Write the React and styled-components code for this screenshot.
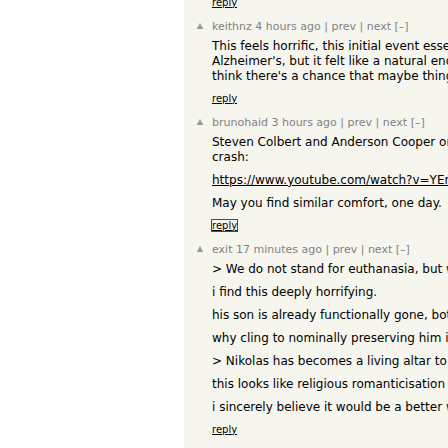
import React from 'react';
import styled, { createGlobalStyle } from 'styled-components';

const GlobalStyle = createGlobalStyle`
  html, body {
    margin: 0;
    padding: 0;
    background: #fff;
    overflow: hidden;
  }
  body {
    font-family: "DejaVu Sans", Verdana, Geneva, sans-serif;
  }
`;

const comments = [
  {
    id: 'c1',
    user: 'keithnz',
    age: '4 hours ago',
    paragraphs: [
      [
        'This feels horrific, this initial event essentially gave him',
        "Alzheimer's, but it felt like a natural end to the story. I",
        "think there's a chance that maybe things could improve here.",
      ],
    ],
  },
  {
    id: 'c2',
    user: 'brunohaid',
    age: '3 hours ago',
    focused: true,
    paragraphs: [
      ['Steven Colbert and Anderson Cooper on grief, loss and his family plane', 'crash:'],
      [{ link: 'https://www.youtube.com/watch?v=YEnOUwvRH6o' }],
      ['May you find similar comfort, one day.'],
    ],
  },
  {
    id: 'c3',
    user: 'exit',
    age: '17 minutes ago',
    paragraphs: [
      ['> We do not stand for euthanasia, but we believe life is sacred.'],
      ['i find this deeply horrifying.'],
      ['his son is already functionally gone, both in mind and in spirit.'],
      ['why cling to nominally preserving him in this state for years?'],
      ['> Nikolas has becomes a living altar to our faith.'],
      ['this looks like religious romanticisation of suffering.'],
      ['i sincerely believe it would be a better way to let him go.'],
    ],
  },
];

const Page = styled.div`
  display: grid;
  grid-template-columns: 184px 1fr;
  height: 448px;
`;

const Gutter = styled.div`
  background: #fff;
`;

const Thread = styled.div`
  background: #f6f6ef;
  overflow: hidden;
  min-width: 0;
`;

const Tail = styled.div`
  margin-top: -3.5px;
  margin-bottom: 11px;
  padding-left: 28px;
`;

const Comment = styled.div`
  display: grid;
  grid-template-columns: 28px 1fr;
  margin-bottom: 11px;
`;

const Vote = styled.div`
  padding-left: 11px;
  padding-top: 1px;

  svg {
    display: block;
  }
`;

const Body = styled.div`
  min-width: 0;
  white-space: nowrap;
`;

const Head = styled.div`
  font-size: 11px;
  line-height: 13px;
  color: #828282;
  margin-bottom: 6px;

  a {
    color: #828282;
    text-decoration: none;
  }
`;

const Para = styled.p`
  margin: 0;
  font-size: 12px;
  line-height: 15px;
  color: #000;

  & + & {
    margin-top: 8px;
  }

  a {
    color: #000;
    text-decoration: underline;
  }
`;

const Reply = styled.div`
  margin-top: ${(p) => (p.$tail ? '0' : '9px')};
  font-size: 10px;
  line-height: 12px;

  a {
    color: #000;
    text-decoration: underline;
    outline: ${(p) => (p.$focused ? '1px solid #f00' : 'none')};
    outline-offset: 0;
  }
`;

const UpArrow = () => (
  <svg width="10" height="10" viewBox="0 0 10 10">
    <polygon points="1.7,8 5,2 8.3,8" fill="#9a9a9a" />
  </svg>
);

const CommentItem = ({ c }) => (
  <Comment>
    <Vote>
      <UpArrow />
    </Vote>
    <Body>
      <Head>
        <a href="#">{c.user}</a> <a href="#">{c.age}</a> | <a href="#">prev</a> |{' '}
        <a href="#">next</a> <a href="#">[–]</a>
      </Head>
      {c.paragraphs.map((lines, i) => (
        <Para key={i}>
          {lines.map((line, j) => (
            <React.Fragment key={j}>
              {j > 0 && <br />}
              {typeof line === 'string' ? line : <a href="#">{line.link}</a>}
            </React.Fragment>
          ))}
        </Para>
      ))}
      <Reply $focused={c.focused}>
        <a href="#">reply</a>
      </Reply>
    </Body>
  </Comment>
);

export default function App() {
  return (
    <>
      <GlobalStyle />
      <Page>
        <Gutter />
        <Thread>
          <Tail>
            <Reply $tail>
              <a href="#">reply</a>
            </Reply>
          </Tail>
          {comments.map((c) => (
            <CommentItem key={c.id} c={c} />
          ))}
        </Thread>
      </Page>
    </>
  );
}
